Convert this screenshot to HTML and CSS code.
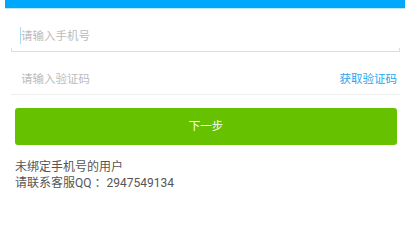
FILE: index.html
```html
<!DOCTYPE html>
<html lang="zh-CN">

<head>
	<meta charset="UTF-8">
	<title>绑定手机号</title>
	<link rel="stylesheet" href="styles.css">
</head>

<body>
	<div class="topbar"></div>
	<div class="form">
		<!-- 手机号 -->
		<div class="field focused">
			<span class="caret"></span>
			<span class="placeholder">请输入手机号</span>
		</div>
		<!-- 验证码 -->
		<div class="field">
			<span class="placeholder">请输入验证码</span>
			<span class="get-code">获取验证码</span>
		</div>
		<div class="btn-next">下一步</div>
		<div class="notes">
			<p>未绑定手机号的用户</p>
			<p>请联系客服QQ<span class="colon">：</span>2947549134</p>
		</div>
	</div>
</body>

</html>
```

FILE: styles.css
```css
body {
	margin: 0;
	background: #fff;
	font-family: Roboto, "Noto Sans CJK SC", sans-serif;
	font-size: 11.5px;
}

.topbar {
	height: 8px;
	margin: 0 9px 0 5px;
	background: #00a8fc;
	border-bottom: 1px solid #bfe7fb;
}

.field {
	position: relative;
	display: flex;
	align-items: flex-end;
	height: 35px;
	margin: 0 14px 0 11px;
	padding: 0 1px 7px 10px;
	border-bottom: 1px solid #eee;
	line-height: 16px;
}

.field.focused {
	border-bottom-color: #c6e4f6;
}

.field.focused::before,
.field.focused::after {
	content: '';
	position: absolute;
	bottom: 0;
	width: 1px;
	height: 3px;
	background: #c6e4f6;
}

.field.focused::before {
	left: 0;
}

.field.focused::after {
	right: 0;
}

.caret {
	position: absolute;
	left: 9px;
	bottom: 7px;
	width: 1px;
	height: 17px;
	background: #a8dcf6;
}

.placeholder {
	flex: 1;
	color: #bbb;
}

.get-code {
	color: #26a8ef;
	padding-right: 2px;
}

.btn-next {
	height: 37px;
	margin: 13px 17px 0 15px;
	border-radius: 3px;
	background: #66c200;
	color: #fff;
	line-height: 37px;
	text-align: center;
}

.notes {
	margin: 14px 15px 0;
	color: #555;
	font-size: 12px;
	line-height: 16px;
}

.notes p {
	margin: 0;
}

.notes .colon {
	margin-left: 3px;
}
```
